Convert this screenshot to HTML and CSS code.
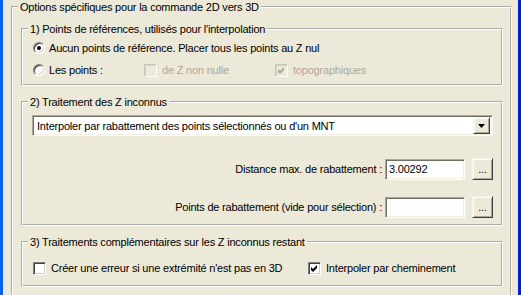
FILE: index.html
```html
<html>
<head>
<title>Options 2D vers 3D</title>
<meta http-equiv="Content-Type" content="text/html; charset=UTF-8">
<link rel="stylesheet" href="styles.css">
</head>
<body>
<div class="window">
  <div class="frame-left"></div>
  <div class="client">
    <fieldset class="group outer">
      <legend>Options spécifiques pour la commande 2D vers 3D</legend>

      <fieldset class="group g1">
        <legend>1) Points de références, utilisés pour l'interpolation</legend>
        <div class="row">
          <div class="opt"><span class="radio checked"></span><span>Aucun points de référence. Placer tous les points au Z nul</span></div>
        </div>
        <div class="row">
          <div class="opt w-radio"><span class="radio"></span><span>Les points :</span></div>
          <div class="opt w-check disabled"><span class="check"></span><span>de Z non nulle</span></div>
          <div class="opt disabled"><span class="check"><svg width="13" height="13"><path d="M3 5 L5 7 L9 3 L9 6 L5 10 L3 8 Z"/></svg></span><span>topographiques</span></div>
        </div>
      </fieldset>

      <fieldset class="group g2">
        <legend>2) Traitement des Z inconnus</legend>
        <div class="g2-body">
          <div class="combo">
            <span class="combo-text">Interpoler par rabattement des points sélectionnés ou d'un MNT</span>
            <span class="btn combo-btn"><svg width="7" height="4"><path d="M0 0 H7 L3.5 4 Z"/></svg></span>
          </div>
          <div class="field-row first">
            <span class="label">Distance max. de rabattement :</span>
            <span class="edit">3.00292</span>
            <span class="btn dots">...</span>
          </div>
          <div class="field-row">
            <span class="label">Points de rabattement (vide pour sélection) :</span>
            <span class="edit"></span>
            <span class="btn dots">...</span>
          </div>
        </div>
      </fieldset>

      <fieldset class="group g3">
        <legend>3) Traitements complémentaires sur les Z inconnus restant</legend>
        <div class="row">
          <div class="opt w-err"><span class="check"></span><span>Créer une erreur si une extrémité n'est pas en 3D</span></div>
          <div class="opt"><span class="check"><svg width="13" height="13"><path d="M3 5 L5 7 L9 3 L9 6 L5 10 L3 8 Z"/></svg></span><span>Interpoler par cheminement</span></div>
        </div>
      </fieldset>
    </fieldset>
  </div>
  <div class="frame-right"></div>
</div>
</body>
</html>
```

FILE: styles.css
```css
body {
  margin: 0;
  background: #ECE9D8;
  font-family: "Liberation Sans", Arial, sans-serif;
  font-size: 11px;
  letter-spacing: -0.2px;
  color: #000;
  overflow: hidden;
}
.window {
  display: flex;
  height: 295px;
  overflow: hidden;
}
.frame-left {
  width: 3px;
  background: #0A5EEA;
}
.frame-right {
  width: 3px;
  background: #0020C8;
}
.client {
  flex: 1;
  padding: 0 6px 0 8px;
  overflow: hidden;
}

/* etched group boxes */
fieldset.group {
  border: 2px groove #fff;
  margin: 0;
  padding: 0;
  min-width: 0;
}
fieldset.group legend {
  margin-left: 5px;
  padding: 0 2px;
  line-height: 14px;
}
fieldset.outer { height: 310px; }
.g1, .g2, .g3 { margin: 9px 7px 0 8px !important; }
.g1 { margin-top: 8px !important; padding: 1px 0 3px 0 !important; }
.g2 { padding: 6px 0 6px 0 !important; }
.g3 { padding: 8px 0 6px 0 !important; }
.g2-body { padding: 0 8px 0 9px; }

.row {
  display: flex;
  align-items: center;
  height: 22px;
  padding-left: 10px;
}
.opt {
  display: flex;
  align-items: center;
  gap: 4px;
}
.w-radio { width: 111px; }
.w-check { width: 131px; }
.w-err { width: 275px; }
.disabled { color: #ACA899; }

.radio {
  width: 10px;
  height: 10px;
  border: 1px solid;
  border-color: #808080 #fff #fff #808080;
  border-radius: 50%;
  background: #fff;
  box-shadow: inset 1px 1px #404040, inset -1px -1px #D4D0C8;
  position: relative;
}
.radio.checked::after {
  content: "";
  position: absolute;
  left: 3px;
  top: 3px;
  width: 4px;
  height: 4px;
  border-radius: 50%;
  background: #000;
}

.check {
  width: 11px;
  height: 11px;
  border: 1px solid;
  border-color: #808080 #fff #fff #808080;
  background: #fff;
  box-shadow: inset 1px 1px #404040, inset -1px -1px #D4D0C8;
  margin-right: 1px;
}
.check svg { display: block; margin: -1px; fill: #000; }
.disabled .check {
  background: #ECE9D8;
  border-color: #C9C6B8 #fff #fff #C9C6B8;
  box-shadow: inset 1px 1px #D8D5C6;
}
.disabled .check svg { fill: #ACA899; }

.btn {
  box-sizing: border-box;
  background: #ECE9D8;
  border: 1px solid;
  border-color: #F4F2E8 #404040 #404040 #F4F2E8;
  box-shadow: inset 1px 1px #fff, inset -1px -1px #ACA899;
  display: flex;
  align-items: center;
  justify-content: center;
}

.combo {
  display: flex;
  height: 21px;
  box-sizing: border-box;
  border: 1px solid;
  border-color: #ACA899 #fff #fff #ACA899;
  box-shadow: inset 1px 1px #716F64, inset -1px -1px #F1EFE2;
  background: #fff;
  padding: 2px;
  align-items: center;
}
.combo-text { flex: 1; padding-left: 2px; }
.combo-btn { width: 17px; height: 17px; }
.combo-btn svg { fill: #000; display: block; }

.field-row {
  display: flex;
  align-items: center;
  justify-content: flex-end;
  height: 22px;
  margin-top: 16px;
}
.field-row.first { margin-top: 22px; }
.label { margin-right: 3px; }
.edit {
  box-sizing: border-box;
  width: 80px;
  height: 21px;
  border: 1px solid;
  border-color: #ACA899 #fff #fff #ACA899;
  box-shadow: inset 1px 1px #716F64, inset -1px -1px #F1EFE2;
  background: #fff;
  padding: 2px 3px;
  line-height: 14px;
  margin-right: 7px;
}
.dots {
  width: 21px;
  height: 22px;
  align-items: flex-end;
  padding-bottom: 5px;
  line-height: 10px;
}
```
